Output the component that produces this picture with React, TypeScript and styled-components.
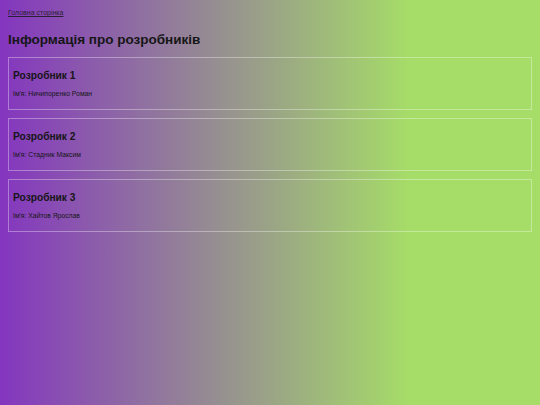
import React from 'react'
import styled, { createGlobalStyle } from 'styled-components'

const GlobalStyle = createGlobalStyle`
  html, body {
    margin: 0;
  }
  body {
    min-height: 405px;
    font-family: 'Liberation Sans', Arial, sans-serif;
    color: #161616;
    background: linear-gradient(to right, #8436bf 0%, #a6dd68 76%, #a6dd68 100%);
  }
`

const Page = styled.main`
  padding: 8px;
`

const Nav = styled.nav`
  font-size: 7px;
  line-height: 8px;
  padding-top: 1px;
`

const HomeLink = styled.a`
  color: #2a1f33;
  text-decoration: underline;
`

const Title = styled.h1`
  font-size: 13.5px;
  line-height: 16px;
  font-weight: bold;
  margin: 15px 0 9px;
`

const Card = styled.section`
  border: 1px solid rgba(255, 255, 255, 0.35);
  padding: 12px 4px 10.5px;
  margin-bottom: 8.5px;
`

const CardTitle = styled.h2`
  font-size: 10.2px;
  line-height: 12px;
  font-weight: bold;
  margin: 0 0 8px;
`

const Name = styled.p`
  font-size: 6.8px;
  line-height: 8px;
  margin: 0;
`

const developers = [
  { id: 1, name: 'Ничипоренко Роман' },
  { id: 2, name: 'Стадник Максим' },
  { id: 3, name: 'Хайтов Ярослав' },
]

const App = () => (
  <Page>
    <GlobalStyle />
    <Nav>
      <HomeLink href="#">Головна сторінка</HomeLink>
    </Nav>
    <Title>Інформація про розробників</Title>
    {developers.map(dev => (
      <Card key={`dev-${dev.id}`}>
        <CardTitle>Розробник {dev.id}</CardTitle>
        <Name>Ім'я: {dev.name}</Name>
      </Card>
    ))}
  </Page>
)

export default App
